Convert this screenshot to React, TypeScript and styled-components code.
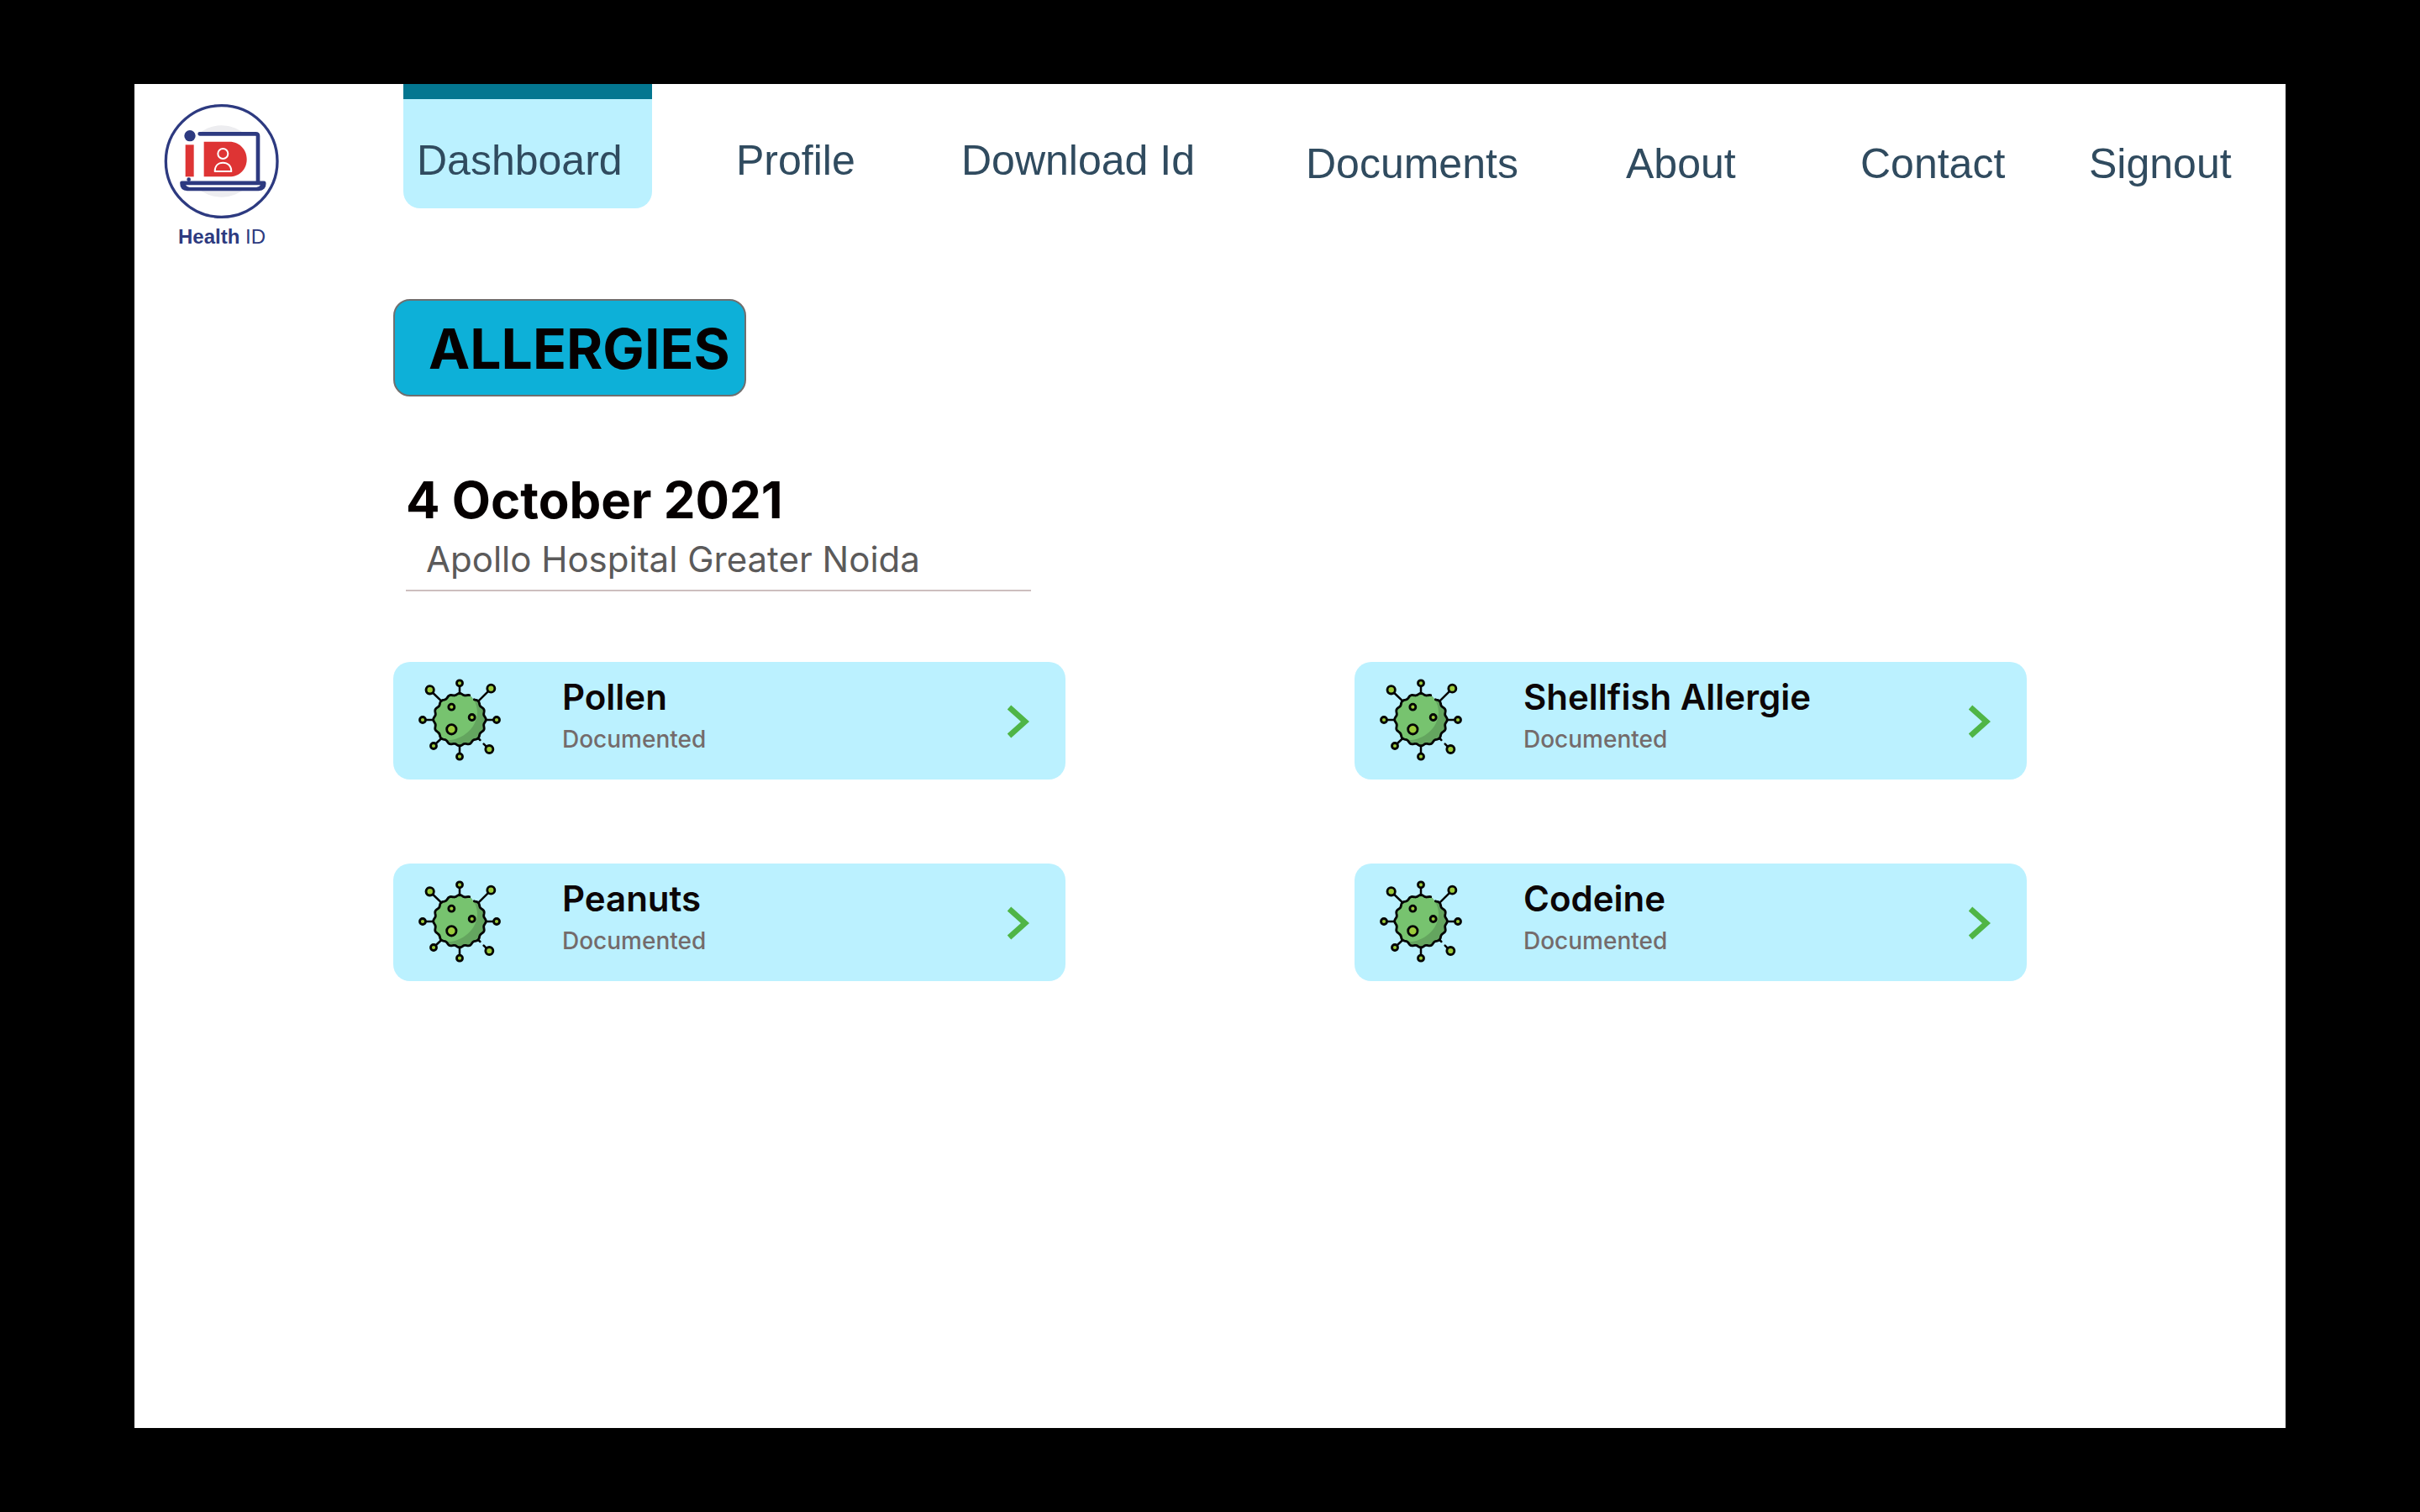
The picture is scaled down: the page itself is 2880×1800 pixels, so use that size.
import React from "react";
import styled, { createGlobalStyle } from "styled-components";

const GlobalStyle = createGlobalStyle`
  *, *::before, *::after { box-sizing: border-box; }
  body { margin: 0; background: #000; }
`;

const heading = `"Inter", "Open Sans", sans-serif`;

const Stage = styled.div`
  display: flex;
  min-height: 100vh;
  padding: 100px 160px;
  background: #000;
  font-family: ${heading};
`;

const Page = styled.div`
  flex: 1;
  min-width: 0;
  background: #fff;
`;

const Header = styled.header`
  display: flex;
  align-items: flex-start;
`;

const Brand = styled.a`
  flex: none;
  display: flex;
  flex-direction: column;
  align-items: center;
  width: 208px;
  margin-right: 112px;
  padding-top: 23px;
  color: #2d3a80;
  font: 400 24px/34px "Liberation Sans", Arial, sans-serif;
  text-decoration: none;
`;

const BrandMark = styled.svg`
  width: 138px;
  height: 138px;
  margin-bottom: 4px;
`;

const Nav = styled.nav`
  flex: 1;
  display: grid;
  grid-template-columns: 396fr 268fr 410fr 381fr 279fr 272fr 234fr;
  align-items: start;
`;

const NavLink = styled.a<{ $lowered?: boolean }>`
  justify-self: start;
  padding-top: ${(p) => (p.$lowered ? 67 : 63)}px;
  color: #304b5f;
  font: 400 50px/56px "Liberation Sans", Arial, sans-serif;
  text-decoration: none;
  white-space: nowrap;
`;

const ActiveLink = styled(NavLink)`
  width: 296px;
  height: 148px;
  padding: 45px 16px 0;
  border-top: 18px solid #037690;
  border-radius: 0 0 20px 20px;
  background: #bbf1ff;
`;

const Main = styled.main`
  padding: 57px 308px 80px;
`;

const Title = styled.h1`
  width: 420px;
  margin: 0 0 84px;
  padding: 2px 0 0 40px;
  border: 2px solid #6f6f6f;
  border-radius: 20px;
  background: #0db0d8;
  color: #050000;
  font-size: 66px;
  font-weight: 700;
  line-height: 110px;
`;

const Visit = styled.section`
  width: 744px;
  margin: 0 0 84px 15px;
  border-bottom: 2px solid #cdbfbf;
`;

const VisitDate = styled.h2`
  margin: 0;
  color: #050000;
  font-size: 60px;
  font-weight: 700;
  line-height: 78px;
  white-space: nowrap;
`;

const Hospital = styled.p`
  margin: 0;
  padding: 2px 0 6px 24px;
  color: #5b5a5a;
  font-size: 42px;
  line-height: 60px;
  white-space: nowrap;
`;

const Cards = styled.ul`
  display: grid;
  grid-template-columns: 1fr 1fr;
  gap: 100px 344px;
  margin: 0;
  padding: 0;
  list-style: none;
`;

const Card = styled.button`
  display: flex;
  align-items: center;
  width: 100%;
  height: 140px;
  padding: 0 43px 0 27px;
  border: 0;
  border-radius: 20px;
  background: #bbf1ff;
  font-family: ${heading};
  text-align: left;
  cursor: pointer;
`;

const VirusSvg = styled.svg`
  flex: none;
  width: 104px;
  height: 104px;
`;

const CardText = styled.span`
  flex: 1;
  display: flex;
  flex-direction: column;
  padding: 0 0 14px 70px;
`;

const CardTitle = styled.span`
  color: #0c0607;
  font-size: 42px;
  font-weight: 600;
  line-height: 58px;
`;

const CardStatus = styled.span`
  color: #746b6b;
  font-size: 28px;
  font-weight: 500;
  line-height: 42px;
`;

const ChevronSvg = styled.svg`
  flex: none;
  width: 26px;
  height: 44px;
`;

/* Scalloped cell wall, open between two angles at the upper right. */
const wall = (fromDeg: number, toDeg: number) => {
  const points: string[] = [];
  for (let deg = fromDeg; deg <= toDeg; deg += 2) {
    const a = (deg * Math.PI) / 180;
    const r = 91 + 3 * Math.cos(16 * a);
    points.push(`${(201 + r * Math.cos(a)).toFixed(1)} ${(200 + r * Math.sin(a)).toFixed(1)}`);
  }
  return `M${points.join("L")}`;
};
const wallFill = wall(0, 358);
const wallStroke = wall(-54, 293);

const bulbs: [number, number, number][] = [
  [201, 70, 10.5],
  [313, 89, 13.5],
  [333, 201, 10.5],
  [307, 306, 13.5],
  [201, 332, 10.5],
  [108, 294, 10.5],
  [69, 201, 10.5],
  [95, 94, 14],
  [172, 155, 10.5],
  [245, 192, 10.5],
  [172, 235, 17],
];

const Virus = () => (
  <VirusSvg viewBox="45 48 312 312" aria-hidden="true">
    <path d={wallFill} fill="#64a55f" />
    <path
      d="M240 118C212 104 170 104 140 134C112 152 108 190 110 220C116 246 126 262 146 272C200 280 262 236 264 176C264 152 256 130 240 118Z"
      fill="#77c36f"
    />
    <g fill="none" stroke="#050505" strokeLinecap="round" strokeLinejoin="round">
      <path d={wallStroke} strokeWidth="8.5" />
      <path
        d="M201 82V108M302 100L268 134M321 201H296M296 296L287 287M274 273L267 266M201 320V293M117 285L136 267M81 201H107M106 105L136 134"
        strokeWidth="7.5"
      />
    </g>
    <g fill="#9ccb3b" stroke="#050505" strokeWidth="8.5">
      {bulbs.map(([cx, cy, r]) => (
        <circle key={`${cx}-${cy}`} cx={cx} cy={cy} r={r} />
      ))}
    </g>
  </VirusSvg>
);

const Chevron = () => (
  <ChevronSvg viewBox="0 0 26 44" aria-hidden="true">
    <path d="M2 6L21 23L2 40" fill="none" stroke="#4fb546" strokeWidth="6.8" />
  </ChevronSvg>
);

const Logo = () => (
  <BrandMark viewBox="136 99 414 414" aria-hidden="true">
    <circle cx="342" cy="306" r="128" fill="#ededf0" />
    <path d="M250 208H478V380H225V208Z" fill="#fff" />
    <circle cx="342" cy="306" r="199" fill="none" stroke="#2d3a80" strokeWidth="10" />
    <circle cx="229" cy="215" r="20" fill="#2d3a80" />
    <path d="M264 208H464Q472 208 472 216V382" fill="none" stroke="#2d3a80" strokeWidth="14" strokeLinecap="round" />
    <circle cx="225" cy="371" r="7" fill="#2d3a80" />
    <path d="M213 247H243V361H213Z" fill="#de3434" />
    <path d="M279 236H370C408 236 432 266 432 299C432 334 406 361 370 361H279Z" fill="#de3434" />
    <path
      d="M200 383H494Q496 404 474 405H220Q200 404 200 383Z"
      fill="#2d3a80"
      stroke="#2d3a80"
      strokeWidth="13"
      strokeLinejoin="round"
    />
    <path d="M214 391H481Q476 399 466 399H228Q219 399 214 391Z" fill="#fff" />
    <g fill="none" stroke="#fff" strokeWidth="6" strokeLinejoin="round">
      <circle cx="347" cy="279" r="18" />
      <path d="M318 342C318 322 330 311 347 311C364 311 377 322 377 342Z" />
    </g>
  </BrandMark>
);

const links = [
  { label: "Profile", lowered: false },
  { label: "Download Id", lowered: false },
  { label: "Documents", lowered: true },
  { label: "About", lowered: true },
  { label: "Contact", lowered: true },
  { label: "Signout", lowered: true },
];

const allergies = ["Pollen", "Shellfish Allergie", "Peanuts", "Codeine"];

export default function App() {
  return (
    <>
      <GlobalStyle />
      <Stage>
        <Page>
          <Header>
            <Brand href="#">
              <Logo />
              <span>
                <b>Health</b> ID
              </span>
            </Brand>
            <Nav>
              <ActiveLink href="#" aria-current="page">
                Dashboard
              </ActiveLink>
              {links.map((link) => (
                <NavLink key={link.label} href="#" $lowered={link.lowered}>
                  {link.label}
                </NavLink>
              ))}
            </Nav>
          </Header>
          <Main>
            <Title>ALLERGIES</Title>
            <Visit>
              <VisitDate>4 October 2021</VisitDate>
              <Hospital>Apollo Hospital Greater Noida</Hospital>
            </Visit>
            <Cards>
              {allergies.map((name) => (
                <li key={name}>
                  <Card type="button">
                    <Virus />
                    <CardText>
                      <CardTitle>{name}</CardTitle>
                      <CardStatus>Documented</CardStatus>
                    </CardText>
                    <Chevron />
                  </Card>
                </li>
              ))}
            </Cards>
          </Main>
        </Page>
      </Stage>
    </>
  );
}
